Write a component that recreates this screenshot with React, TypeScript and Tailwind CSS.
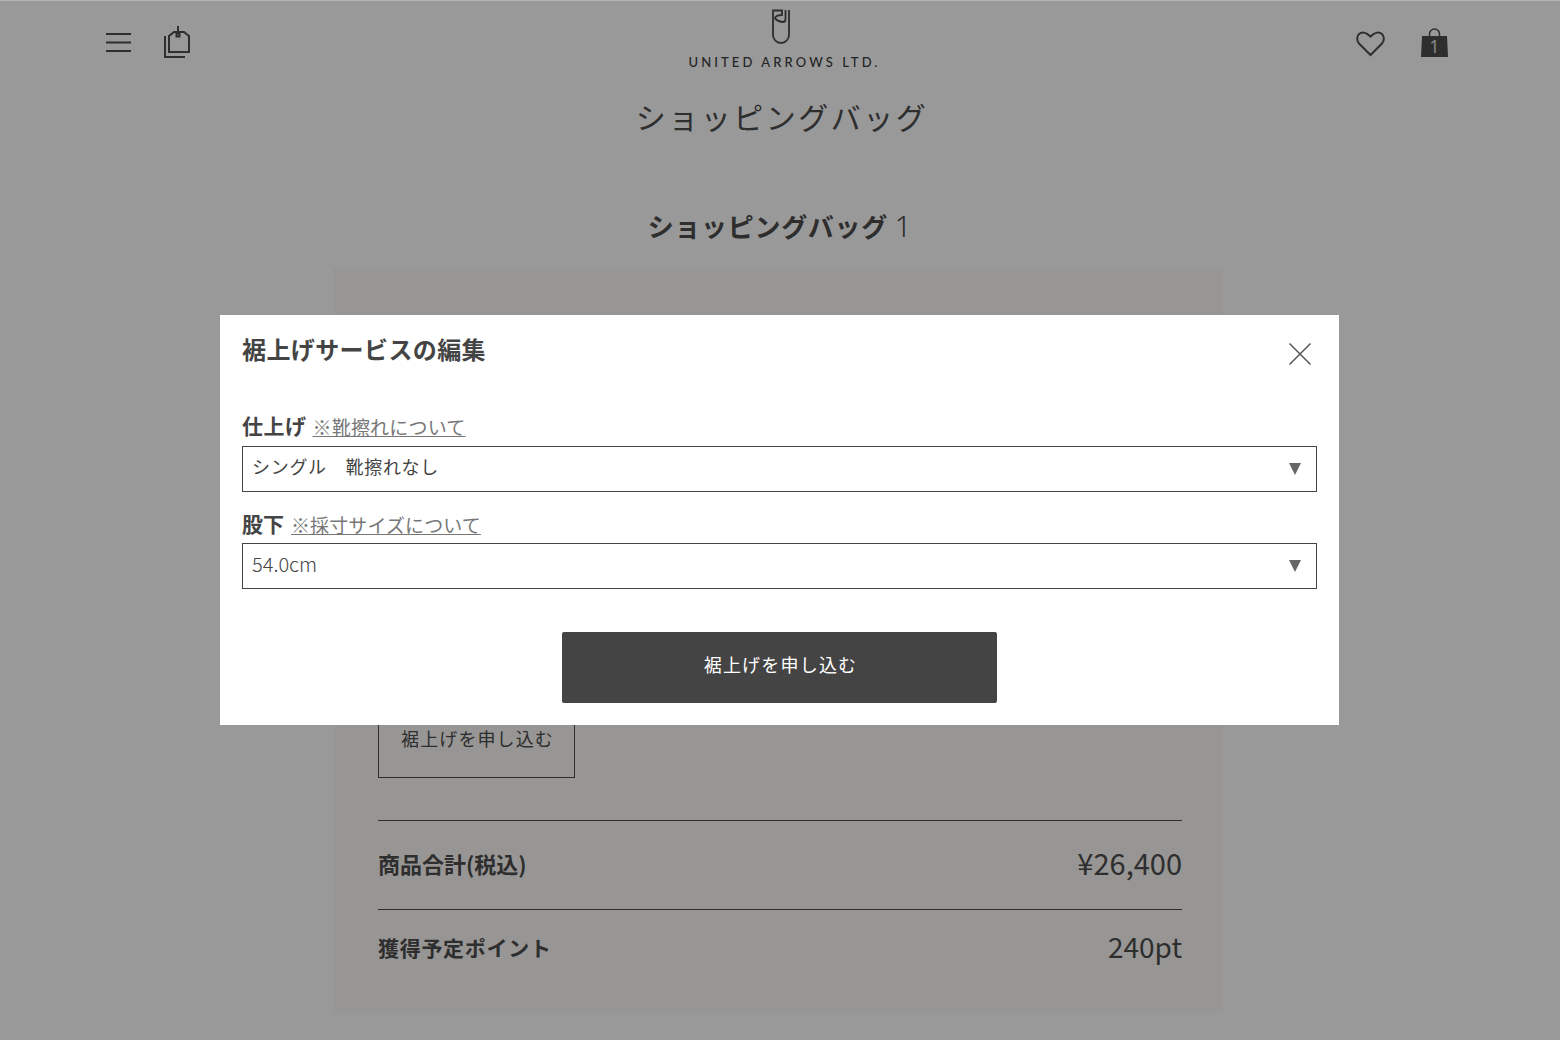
const jp = 'font-["Noto_Sans_CJK_JP","Noto_Sans",sans-serif]'

function Header() {
  return (
    <header className="flex h-[94px] items-start pl-[105px] pr-[112px] text-[#4d4d4d]">
      <div className="flex flex-1 items-center gap-[31px] pt-[25px]">
        <svg width="27" height="20" viewBox="0 0 27 20" fill="none" stroke="currentColor" strokeWidth="2">
          <path d="M1 2h25M1 10.500h25M1 19h25" />
        </svg>
        <svg width="28" height="34" viewBox="0 0 28 34" fill="none" stroke="currentColor" strokeWidth="2">
          <path d="M2 11v21h20" />
          <path d="M6 27V11l5-4h10l5 4v16z" />
          <path d="M15 1v7" />
          <rect x="13.500" y="8.500" width="3" height="3" />
        </svg>
      </div>
      <div className="ml-[13px] flex flex-col items-center pt-[9px]">
        <svg width="20" height="35" viewBox="0 0 20 35" fill="none" stroke="currentColor" strokeWidth="1.800" className="mr-[4px]">
          <path d="M2 13v13a8 8 0 0 0 16 0V1" />
          <path d="M2 13V1.500h9V6c-4 0-7 1-7 3.500 2 2 5 3.500 8 3.500 2 0 2.500-1 2.500-3V1" />
        </svg>
        <span className="-mr-[3px] mt-[10px] font-['Lato',sans-serif] text-[13px] font-medium leading-[17px] tracking-[3.100px] text-[#3d3d3d]">
          UNITED ARROWS LTD.
        </span>
      </div>
      <div className="flex flex-1 items-center justify-end gap-[35px] pt-[28px]">
        <svg width="31" height="28" viewBox="0 0 30 28" fill="none" stroke="currentColor" strokeWidth="2">
          <path d="M15 26 3.500 14.500C-2 8 5.500-2 15 7.500 24.500-2 32 8 26.500 14.500z" />
        </svg>
        <div className="relative h-[30px] w-[27px]">
          <svg width="27" height="30" viewBox="0 0 27 30" fill="currentColor">
            <path d="M1 8h25l1 21H0z" />
            <path d="M8.500 8V6a5 5 0 0 1 10 0v2" fill="none" stroke="currentColor" strokeWidth="1.500" />
          </svg>
          <span className="absolute inset-x-0 top-[6px] text-center font-['Noto_Sans',sans-serif] text-[18px] leading-[24px] text-[#ddd]">
            1
          </span>
        </div>
      </div>
    </header>
  )
}

function Modal() {
  return (
    <div className="absolute inset-0 border-t border-t-[#b5b5b5] bg-black/40 pl-[220px] pt-[314px]">
      <div className="h-[410px] w-[1119px] bg-white px-[22px] text-[#444]">
        <div className="flex items-start justify-between pr-[5px] pt-[16px]">
          <h2 className="text-[24px] font-bold leading-[35px] tracking-[.4px]">裾上げサービスの編集</h2>
          <svg width="24" height="24" viewBox="0 0 24 24" fill="none" stroke="#555" strokeWidth="1.500" className="mt-[11px]">
            <path d="M1.500 1.500l21 21M22.500 1.500l-21 21" />
          </svg>
        </div>

        <div className="mt-[43px] flex h-[37px] items-end pb-[4px]">
          <span className="text-[21px] font-bold leading-[33px] tracking-[.5px]">仕上げ</span>
          <a className="ml-[6px] text-[19px] leading-[31px] tracking-[.2px] text-[#777] underline">※靴擦れについて</a>
        </div>
        <div className="flex h-[46px] items-center justify-between border border-[#444] pl-[9px] pr-[15px] text-[18px] tracking-[.7px]">
          <span className="-mt-[6px]">シングル　靴擦れなし</span>
          <span className="h-0 w-0 border-x-[6.500px] border-t-[12px] border-x-transparent border-t-[#666]" />
        </div>

        <div className="mt-[15px] flex h-[36px] items-end pb-[3px]">
          <span className="text-[21px] font-bold leading-[33px]">股下</span>
          <a className="ml-[7px] text-[19px] leading-[31px] tracking-[.1px] text-[#777] underline">※採寸サイズについて</a>
        </div>
        <div className="flex h-[46px] items-center justify-between border border-[#444] pl-[9px] pr-[15px] text-[20px] font-light">
          <span className="-mt-[4px]">54.0cm</span>
          <span className="h-0 w-0 border-x-[6.500px] border-t-[12px] border-x-transparent border-t-[#666]" />
        </div>

        <button className="mx-auto mt-[43px] block h-[71px] w-[435px] rounded-[2px] bg-[#444] pb-[7px] pl-[2px] text-[18px] tracking-[1.200px] text-white">
          裾上げを申し込む
        </button>
      </div>
    </div>
  )
}

export default function App() {
  return (
    <div className={`relative h-[1040px] overflow-hidden bg-white text-[#4d4d4d] ${jp}`}>
      <Header />
      <h1 className="pl-[4px] text-center text-[30px] leading-[44px] tracking-[2.500px]">ショッピングバッグ</h1>
      <p className="mt-[68px] text-center text-[26px] font-bold leading-[40px] tracking-[.7px]">
        ショッピングバッグ <span className="font-['Noto_Sans',sans-serif] text-[30px] font-light">1</span>
      </p>

      <section className="ml-[333px] mt-[22px] h-[745px] w-[890px] bg-[#fcfaf8] pl-[45px] pr-[41px] pt-[444px]">
        <button className="h-[66px] w-[197px] border border-[#4d4d4d] pb-[14px] pl-[2px] text-[18px] tracking-[1.100px]">
          裾上げを申し込む
        </button>
        <div className="mt-[42px] flex h-[89px] items-center justify-between border-t border-[#4d4d4d] pb-[4px]">
          <span className="text-[22px] font-bold">商品合計(税込)</span>
          <span className="text-[29px]">¥26,400</span>
        </div>
        <div className="flex h-[78px] items-center justify-between border-t border-[#4d4d4d] pb-[2px]">
          <span className="text-[21px] font-bold tracking-[.7px]">獲得予定ポイント</span>
          <span className="-mt-[4px] text-[28px]">240pt</span>
        </div>
      </section>

      <Modal />
    </div>
  )
}
